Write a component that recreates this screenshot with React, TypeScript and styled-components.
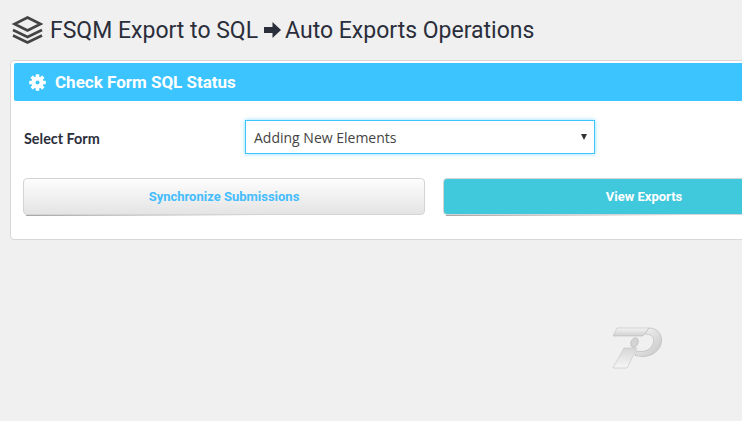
import styled, { createGlobalStyle } from "styled-components";

const GlobalStyle = createGlobalStyle`
  html, body {
    margin: 0;
    padding: 0;
    width: 742px;
    height: 421px;
    overflow: hidden;
    background: #f0f0f0;
  }
`;

const Page = styled.div`
  position: relative;
  width: 742px;
  height: 421px;
  padding: 10px 0 0 10px;
  box-sizing: border-box;
  overflow: hidden;
  font-family: Roboto, "Liberation Sans", sans-serif;
`;

const Title = styled.div`
  display: flex;
  align-items: center;
  height: 40px;
  margin-bottom: 10px;
  color: #2b2e3b;
  font-size: 23px;
  white-space: nowrap;
`;

const LayersIcon = styled.svg`
  width: 32px;
  height: 28px;
  margin: 0 7px 0 1px;
`;

const ArrowIcon = styled.svg`
  width: 17px;
  height: 16px;
  margin: 0 4px 0 6px;
`;

const Card = styled.div`
  width: 846px;
  height: 180px;
  box-sizing: border-box;
  padding: 2px 3px;
  background: #fff;
  border: 1px solid #d8d8d8;
  border-radius: 4px;
`;

const CardHeader = styled.div`
  display: flex;
  align-items: center;
  gap: 9px;
  height: 38px;
  padding-left: 15px;
  background: #3cc4ff;
  border-radius: 2px;
  color: #fff;
  font-size: 17px;
  font-weight: 700;
`;

const GearIcon = styled.svg`
  width: 17px;
  height: 17px;
`;

const FormRow = styled.div`
  display: flex;
  align-items: center;
  margin-top: 19px;
  padding-left: 10px;
`;

const Label = styled.div`
  width: 221px;
  padding-top: 2px;
  color: #2b2e3b;
  font-family: Lato, sans-serif;
  font-size: 14.4px;
  font-weight: 700;
`;

const SelectBox = styled.div`
  display: flex;
  align-items: center;
  justify-content: space-between;
  width: 350px;
  height: 34px;
  box-sizing: border-box;
  padding: 0 8px;
  background: #fff;
  border: 1px solid #3cc4ff;
  box-shadow: 0 0 4px rgba(60, 196, 255, 0.6);
  color: #444;
  font-family: "Open Sans", sans-serif;
  font-size: 14px;
`;

const Caret = styled.span`
  width: 0;
  height: 0;
  border-left: 3px solid transparent;
  border-right: 3px solid transparent;
  border-top: 6px solid #333;
  margin-right: -1px;
`;

const ButtonRow = styled.div`
  display: flex;
  gap: 18px;
  margin-top: 24px;
  padding-left: 9px;
`;

const Button = styled.div<{ $primary?: boolean }>`
  position: relative;
  display: flex;
  align-items: center;
  justify-content: center;
  width: 402px;
  height: 37px;
  box-sizing: border-box;
  border: 1px solid #d4d4d4;
  border-radius: 4px;
  background: ${(p) =>
    p.$primary ? "#40c8dc" : "linear-gradient(#fdfdfd, #e4e4e4)"};
  color: ${(p) => (p.$primary ? "#fff" : "#45bdfd")};
  font-size: 13px;
  font-weight: 700;

  &::after {
    content: "";
    position: absolute;
    left: 2px;
    right: 40%;
    bottom: -2px;
    height: 1px;
    background: linear-gradient(to right, rgba(0, 0, 0, 0.35), rgba(0, 0, 0, 0));
  }
`;

const Watermark = styled.svg`
  position: absolute;
  left: 600px;
  top: 315px;
  width: 75px;
  height: 65px;
`;

const teeth = [0, 45, 90, 135, 180, 225, 270, 315];

export default function App() {
  return (
    <Page>
      <GlobalStyle />
      <Title>
        <LayersIcon viewBox="0 0 32 28" fill="none" stroke="#444" strokeWidth="2.6">
          <path d="M16.5 1.5 L29.5 8 L16.5 14.5 L3.5 8 Z" />
          <path d="M2 14 L16.5 21 L31 14" />
          <path d="M2 19.5 L16.5 26.5 L31 19.5" />
        </LayersIcon>
        FSQM Export to SQL
        <ArrowIcon viewBox="0 0 17 16">
          <path d="M0 5 H8.5 V0 L17 8 L8.5 16 V11 H0 Z" fill="#2b2e3b" />
        </ArrowIcon>
        Auto Exports Operations
      </Title>
      <Card>
        <CardHeader>
          <GearIcon viewBox="0 0 17 17">
            {teeth.map((a) => (
              <rect key={a} x="6.7" y="0.2" width="3.6" height="4" rx="0.6" fill="#fff" transform={`rotate(${a} 8.5 8.5)`} />
            ))}
            <circle cx="8.5" cy="8.5" r="6" fill="#fff" />
            <circle cx="8.5" cy="8.5" r="2" fill="#3cc4ff" />
          </GearIcon>
          Check Form SQL Status
        </CardHeader>
        <FormRow>
          <Label>Select Form</Label>
          <SelectBox>
            Adding New Elements
            <Caret />
          </SelectBox>
        </FormRow>
        <ButtonRow>
          <Button>Synchronize Submissions</Button>
          <Button $primary>View Exports</Button>
        </ButtonRow>
      </Card>
      <Watermark viewBox="0 0 75 65">
        <defs>
          <linearGradient id="wmBar" x1="0" y1="0" x2="0" y2="1">
            <stop offset="0" stopColor="#f4f4f4" />
            <stop offset="1" stopColor="#cfcfcf" />
          </linearGradient>
          <linearGradient id="wmStem" x1="0" y1="0" x2="0" y2="1">
            <stop offset="0" stopColor="#d6d6d6" />
            <stop offset="1" stopColor="#f6f6f6" />
          </linearGradient>
          <linearGradient id="wmBowl" x1="0" y1="0" x2="1" y2="1">
            <stop offset="0" stopColor="#fafafa" />
            <stop offset="1" stopColor="#c4c4c4" />
          </linearGradient>
        </defs>
        <path d="M17 13 H49 L43 21 H13 Z" fill="url(#wmBar)" stroke="#c0c0c0" strokeWidth="0.6" />
        <path d="M24 33 H37 L27 53 H13 Z" fill="url(#wmStem)" stroke="#c4c4c4" strokeWidth="0.6" />
        <path d="M49 13 C58 13 62 20 61.5 26 C61 35 52 42 42 41.5 L35 40.5 L37 36 C45 38 52 34 53.5 27 C54.5 22 51 19 45 19 Z" fill="url(#wmBowl)" stroke="#b4b4b4" strokeWidth="0.6" />
        <ellipse cx="34.5" cy="27.5" rx="3.5" ry="5" transform="rotate(25 34.5 27.5)" fill="#d4d4d4" stroke="#b4b4b4" strokeWidth="0.6" />
      </Watermark>
    </Page>
  );
}
